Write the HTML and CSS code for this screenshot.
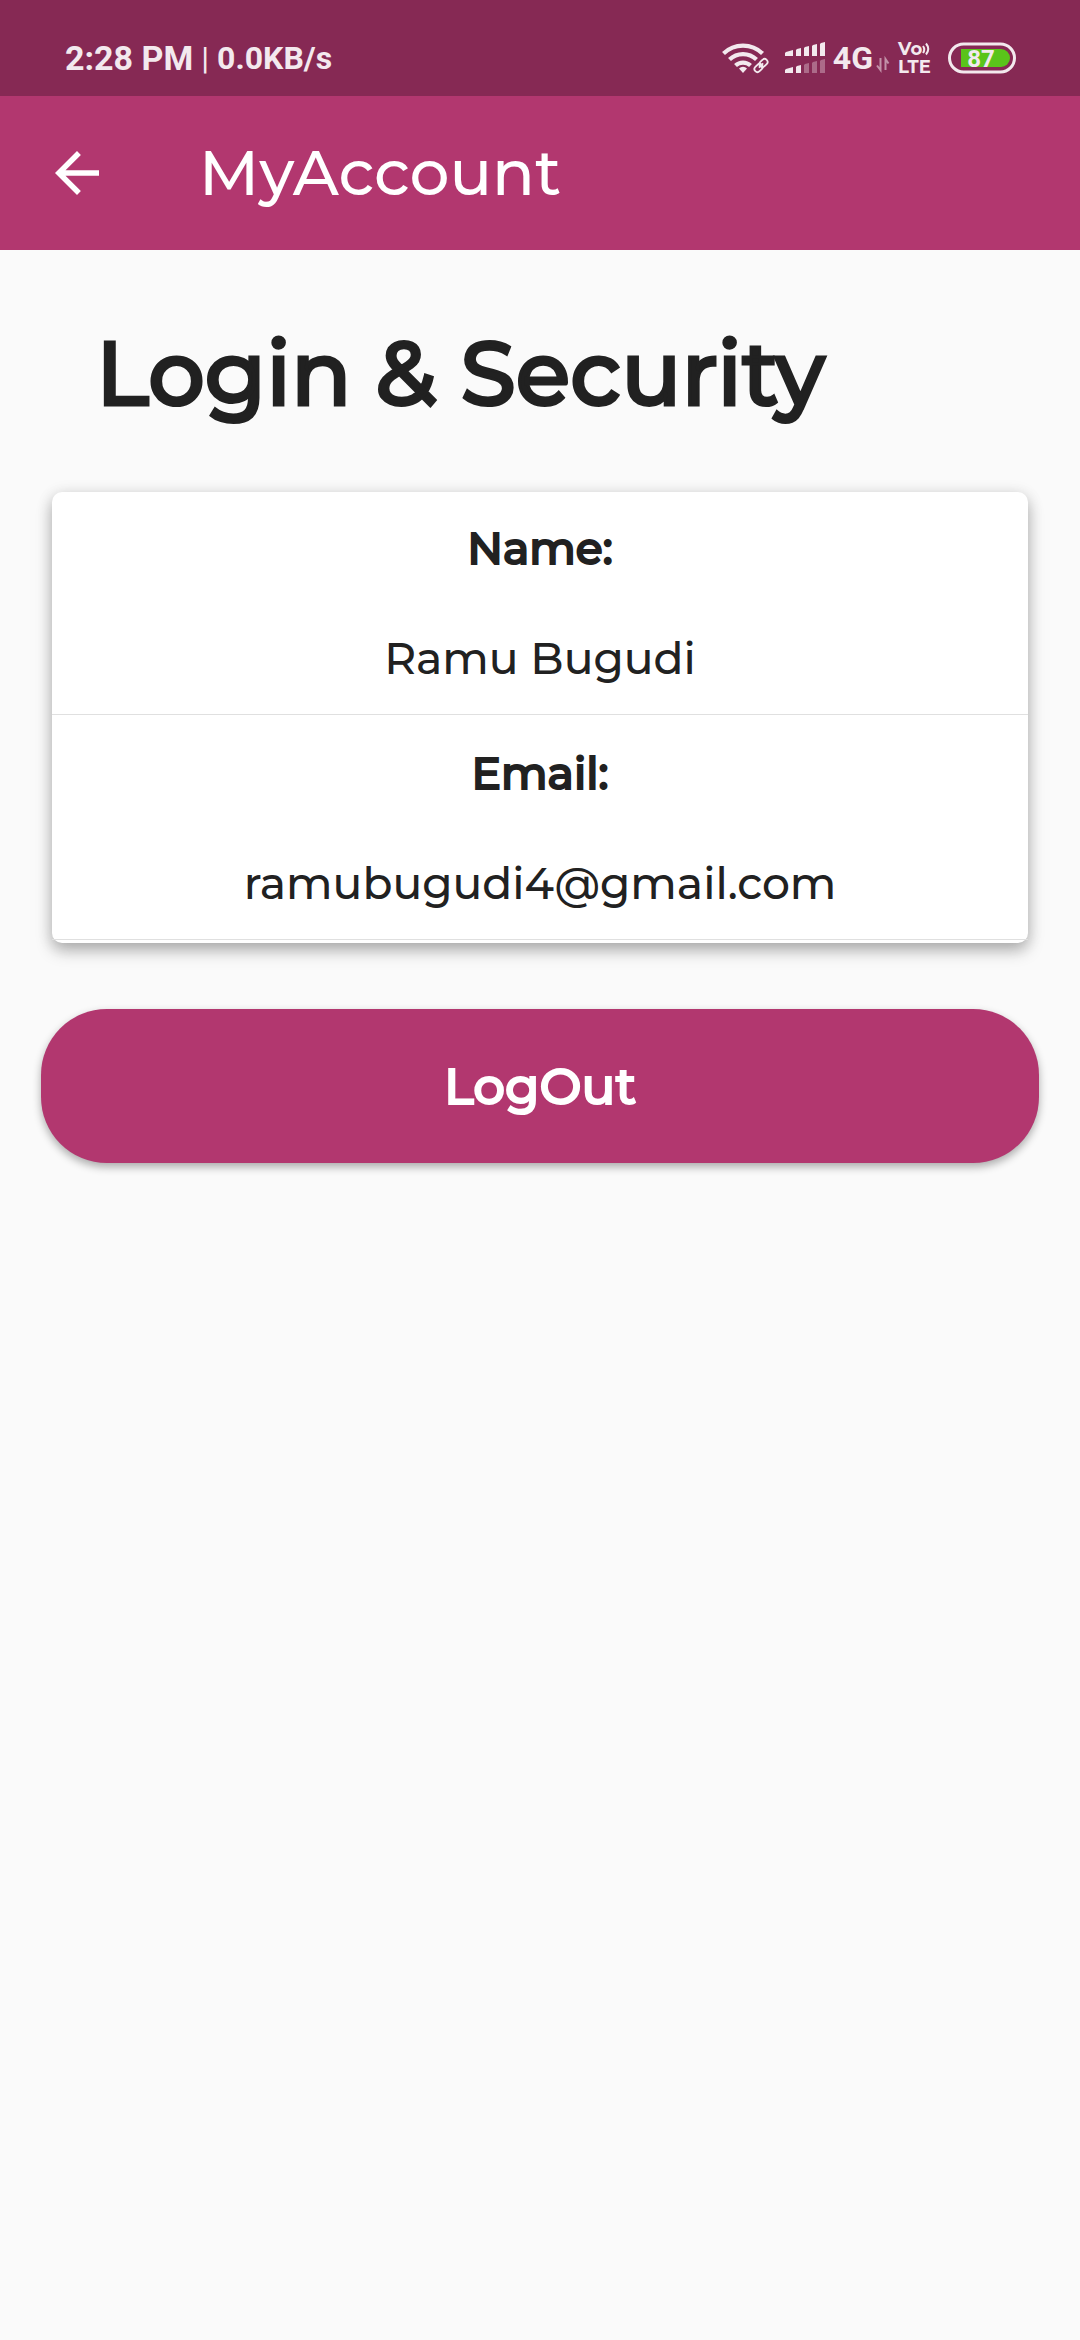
FILE: index.html
```html
<!DOCTYPE html>
<html lang="en">
<head>
  <meta charset="utf-8">
  <meta name="viewport" content="width=device-width, initial-scale=1">
  <title>MyAccount</title>
  <link rel="stylesheet" href="styles.css">
</head>
<body>
  <div class="status-bar">
    <div class="status-left">
      <span class="clock">2:28 PM</span>
      <span class="separator">|</span>
      <span class="speed">0.0KB/s</span>
    </div>
    <div class="status-right">
      <svg class="wifi" width="48" height="32" viewBox="0 0 48 32" fill="none" stroke="currentColor" aria-hidden="true">
        <path d="M1.500 11.500a28 28 0 0 1 39 0" stroke-width="4.200"/>
        <path d="M7.500 17.500a19.500 19.500 0 0 1 27 0" stroke-width="4.200"/>
        <path d="M13.500 23.500a11 11 0 0 1 15 0" stroke-width="4.200"/>
        <path d="M21 31l-4-4.500a5.500 5.500 0 0 1 8 0z" fill="currentColor" stroke="none"/>
        <g stroke-width="1.800" transform="rotate(-45 39 23.500)">
          <rect x="31" y="20.500" width="9" height="6" rx="3"/>
          <rect x="38" y="20.500" width="9" height="6" rx="3"/>
          <path d="M36 23.500h6"/>
        </g>
      </svg>
      <svg class="signal" width="40" height="32" viewBox="0 0 40 32" fill="currentColor" aria-hidden="true">
        <path d="M0 14v-3l1-1 7-2v6zM11 14V8l1-1 4-1v8zM19 14V6l1-1 4-1v10zM27 14V4l1-1 4-1v12zM35 14V2l1-1 4-1v14z"/>
        <path d="M0 31v-3l1-1 7-2v6zM11 31v-6l1-1 4-1v8z"/>
        <path opacity=".35" d="M19 31v-8l1-1 4-1v10zM27 31V21l1-1 4-1v12zM35 31V19l1-1 4-1v14z"/>
      </svg>
      <span class="network">4G</span>
      <svg class="data" width="14" height="32" viewBox="0 0 14 32" fill="none" stroke="currentColor" stroke-width="2" aria-hidden="true">
        <path d="M4.500 16v12L1 23.500M9.500 28V17l3 4.500"/>
      </svg>
      <span class="volte">
        <span class="volte-line">Vo<svg width="8" height="14" viewBox="0 0 8 14" fill="none" stroke="currentColor" stroke-width="2" aria-hidden="true"><path d="M1 4q2.500 3.500 0 7M4 1.500q4.500 5.500 0 11"/></svg></span>
        <span class="volte-line">LTE</span>
      </span>
      <svg class="battery" width="68" height="32" viewBox="0 0 68 32" role="img" aria-label="Battery 87">
        <rect x="1.500" y="2" width="65" height="28" rx="14" fill="none" stroke="currentColor" stroke-width="3"/>
        <path d="M13 7h40a9 9 0 0 1 0 18H13z" fill="#5ac41a"/>
        <text x="33" y="25" font-size="24" text-anchor="middle" fill="currentColor">87</text>
      </svg>
    </div>
  </div>

  <header class="app-bar">
    <button class="back" type="button" aria-label="Back">
      <svg width="66" height="66" viewBox="0 0 24 24" fill="currentColor" aria-hidden="true">
        <path d="M20 11H7.830l5.590-5.590L12 4l-8 8 8 8 1.410-1.410L7.830 13H20v-2z"/>
      </svg>
    </button>
    <h1 class="title">MyAccount</h1>
  </header>

  <main class="content">
    <h2 class="heading">Login &amp; Security</h2>
    <dl class="card">
      <div class="row">
        <dt>Name:</dt>
        <dd>Ramu Bugudi</dd>
      </div>
      <div class="row">
        <dt>Email:</dt>
        <dd>ramubugudi4@gmail.com</dd>
      </div>
    </dl>
    <button class="logout" type="button">LogOut</button>
  </main>
</body>
</html>
```
FILE: styles.css
```css
* {
  box-sizing: border-box;
}

body {
  margin: 0;
  min-height: 100vh;
  background: #fafafa;
  color: #212121;
  font-family: Montserrat, Inter, sans-serif;
  font-weight: 500;
}

.status-bar {
  display: flex;
  align-items: center;
  justify-content: space-between;
  height: 96px;
  padding: 20px 64px 0 65px;
  background: #862954;
  color: #f3e9ee;
  font-family: Roboto, sans-serif;
  font-weight: 700;
}

.status-left,
.status-right {
  display: flex;
  align-items: center;
}

.status-left {
  gap: 8px;
}

.clock {
  font-size: 34px;
}

.separator {
  font-size: 32px;
  font-weight: 400;
}

.speed {
  font-size: 32px;
}

.signal {
  margin-left: 15px;
}

.network {
  margin-left: 8px;
  font-size: 32px;
}

.data {
  margin-left: 3px;
  opacity: .55;
}

.volte {
  display: flex;
  flex-direction: column;
  width: 34px;
  margin-left: 8px;
  font-family: Montserrat, Lato, sans-serif;
  font-size: 18px;
  line-height: 18px;
}

.volte-line {
  display: flex;
  align-items: center;
}

.battery {
  margin-left: 16px;
}

.app-bar {
  display: flex;
  align-items: center;
  gap: 89px;
  height: 154px;
  padding: 0 44px;
  background: #b2376f;
  color: #fff;
}

.back {
  display: flex;
  padding: 0;
  border: 0;
  background: none;
  color: inherit;
}

.title {
  margin: 0;
  font-size: 63px;
  font-weight: 500;
  line-height: 76px;
}

.content {
  padding: 65px 41px;
}

/* Headings use the medium face, thickened by an outline. */
.heading {
  margin: 0 55px;
  font-size: 89px;
  font-weight: 500;
  line-height: 116px;
  -webkit-text-stroke: 3px currentColor;
}

.card {
  margin: 61px 11px 66px;
  padding-bottom: 1px;
  border-radius: 10px;
  background: #fff;
  box-shadow: 0 8px 16px rgba(0, 0, 0, .26), 0 2px 16px rgba(0, 0, 0, .12);
  font-size: 44px;
  line-height: 50px;
  text-align: center;
}

.row {
  margin-bottom: 2px;
  padding: 31px 16px;
  border-bottom: 1px solid #e0e0e0;
}

.row dt {
  -webkit-text-stroke: 2px currentColor;
}

.row dd {
  margin: 60px 0 0;
}

.logout {
  display: block;
  width: 100%;
  padding: 48px 16px 46px;
  border: 0;
  border-radius: 66px;
  background: #b2376f;
  box-shadow: 0 4px 8px rgba(0, 0, 0, .32);
  color: #fff;
  font-family: inherit;
  font-size: 50px;
  font-weight: 500;
  line-height: 60px;
  -webkit-text-stroke: 2px currentColor;
}
```
